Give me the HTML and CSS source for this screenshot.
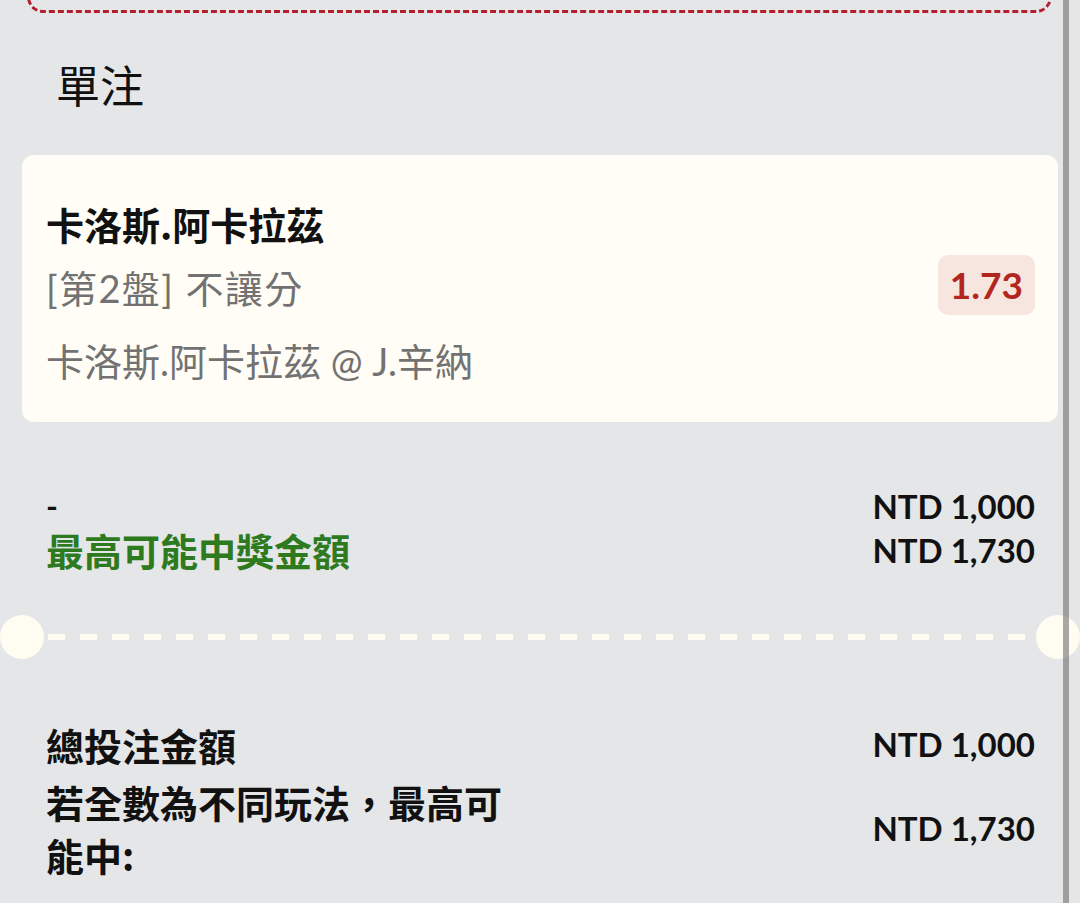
FILE: index.html
```html
<!DOCTYPE html>
<html lang="zh-Hant">
<head>
<meta charset="utf-8">
<link rel="stylesheet" href="styles.css">
</head>
<body>
<div class="page">
  <div class="prev-box"></div>
  <h2 class="section-title">單注</h2>
  <div class="bet-card">
    <div class="bet-info">
      <div class="bet-name">卡洛斯.阿卡拉茲</div>
      <div class="bet-market">[第2盤] 不讓分</div>
      <div class="bet-match">卡洛斯.阿卡拉茲 @ J.辛納</div>
    </div>
    <div class="odds">1.73</div>
  </div>
  <div class="stake-rows">
    <div class="row">
      <span class="label dash">-</span>
      <span class="amount">NTD 1,000</span>
    </div>
    <div class="row">
      <span class="label green">最高可能中獎金額</span>
      <span class="amount">NTD 1,730</span>
    </div>
  </div>
  <div class="divider">
    <span class="notch"></span>
    <span class="dash-line"></span>
    <span class="notch"></span>
  </div>
  <div class="summary">
    <div class="row">
      <span class="label">總投注金額</span>
      <span class="amount">NTD 1,000</span>
    </div>
    <div class="row">
      <span class="label wrap">若全數為不同玩法，最高可能中:</span>
      <span class="amount">NTD 1,730</span>
    </div>
  </div>
</div>
<div class="scrollbar"></div>
</body>
</html>
```

FILE: styles.css
```css
html, body {
  margin: 0;
  padding: 0;
}
body {
  width: 1080px;
  height: 903px;
  overflow: hidden;
  background: #e5e6e8;
  font-family: "Noto Sans CJK TC", "Noto Sans", sans-serif;
  color: #111;
  position: relative;
}
.page {
  padding: 0 22px;
}
.prev-box {
  height: 67px;
  margin: -60px 6px 0 5px;
  border: 3px dashed #b31f2e;
  border-radius: 16px;
}
.section-title {
  margin: 0;
  padding: 43px 0 0 34px;
  font-size: 44px;
  font-weight: 400;
  line-height: 56px;
  height: 99px;
  box-sizing: content-box;
}
.bet-card {
  background: #fffdf5;
  border-radius: 12px;
  padding: 43px 23px 24px 24px;
  display: flex;
  align-items: center;
  justify-content: space-between;
}
.bet-name {
  font-size: 38px;
  font-weight: 700;
  line-height: 52px;
}
.bet-market, .bet-match {
  font-family: "Lato", "Noto Sans CJK TC", sans-serif;
  font-size: 38px;
  color: #727272;
  line-height: 73px;
}
.bet-market {
  padding-top: 2px;
  letter-spacing: 1.4px;
}
.odds {
  font-family: "Lato", sans-serif;
  font-weight: 700;
  font-size: 37px;
  color: #b3261e;
  background: #f7e6df;
  border-radius: 10px;
  padding: 8px 12px;
  line-height: 44px;
  margin-bottom: 26px;
}
.stake-rows {
  padding: 62px 23px 0 24px;
}
.row {
  display: flex;
  justify-content: space-between;
  align-items: center;
}
.stake-rows .row {
  line-height: 44px;
}
.label {
  font-size: 38px;
  font-weight: 700;
}
.dash {
  font-family: "Lato", sans-serif;
  font-size: 32px;
}
.green {
  color: #2e7a1e;
}
.amount {
  font-family: "Lato", sans-serif;
  font-weight: 700;
  font-size: 33px;
}
.divider {
  display: flex;
  align-items: center;
  margin: 43px -22px 0;
  height: 44px;
}
.notch {
  width: 44px;
  height: 44px;
  border-radius: 50%;
  background: #fffdf2;
  flex: none;
}
.dash-line {
  flex: 1;
  height: 6px;
  margin: 0 5px 0 4px;
  background: repeating-linear-gradient(90deg, #fffdf2 0 17px, transparent 17px 32px);
}
.summary {
  padding: 59px 23px 0 24px;
}
.summary .row {
  line-height: 53px;
}
.summary .row + .row {
  margin-top: 4px;
}
.wrap {
  width: 480px;
}
.scrollbar {
  position: absolute;
  left: 1063px;
  top: 0;
  width: 6px;
  height: 903px;
  background: rgba(110, 110, 110, 0.6);
}
```
